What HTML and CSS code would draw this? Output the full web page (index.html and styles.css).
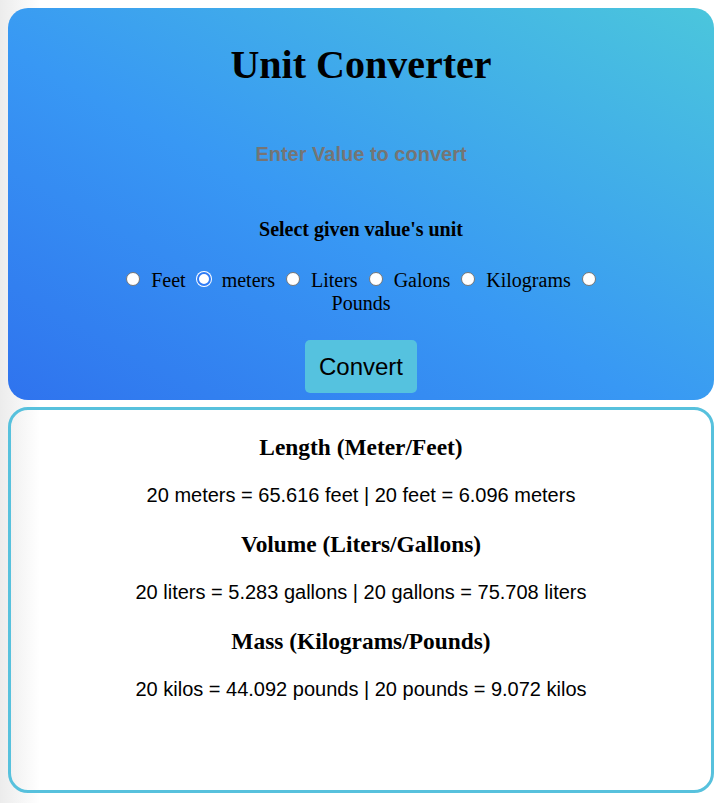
FILE: index.html
```html
<!DOCTYPE html>
<html lang="en">
<head>
<meta charset="utf-8">
<title>Unit Converter</title>
<link rel="stylesheet" href="styles.css">
</head>
<body>
  <div class="converter">
    <h1 class="title">Unit Converter</h1>
    <input class="value-input" type="text" placeholder="Enter Value to convert">
    <div class="unit-label">Select given value's unit</div>
    <div class="units">
      <input class="radio" type="radio" name="unit" id="feet"> <label for="feet">Feet</label>
      <input class="radio radio-active" type="radio" name="unit" id="meters"> <label for="meters">meters</label>
      <input class="radio" type="radio" name="unit" id="liters"> <label for="liters">Liters</label>
      <input class="radio" type="radio" name="unit" id="galons"> <label for="galons">Galons</label>
      <input class="radio" type="radio" name="unit" id="kilograms"> <label for="kilograms">Kilograms</label>
      <input class="radio" type="radio" name="unit" id="pounds"> <label for="pounds">Pounds</label>
    </div>
    <button class="convert-btn" type="button">Convert</button>
  </div>
  <div class="results">
    <h3 class="result-title">Length (Meter/Feet)</h3>
    <p class="result-text">20 meters = 65.616 feet | 20 feet = 6.096 meters</p>
    <h3 class="result-title">Volume (Liters/Gallons)</h3>
    <p class="result-text">20 liters = 5.283 gallons | 20 gallons = 75.708 liters</p>
    <h3 class="result-title">Mass (Kilograms/Pounds)</h3>
    <p class="result-text">20 kilos = 44.092 pounds | 20 pounds = 9.072 kilos</p>
  </div>
</body>
</html>
```

FILE: styles.css
```css
html, body {
  margin: 0;
  padding: 0;
}
body {
  margin: 8px;
  font-family: "Liberation Serif", "Times New Roman", serif;
  font-size: 20px;
  color: #000;
  background: linear-gradient(to right, #ececec 0px, #ffffff 40px) fixed;
  min-height: 787px;
}
.converter {
  width: 706px;
  height: 392px;
  box-sizing: border-box;
  border-radius: 20px;
  background: linear-gradient(to top right, #2f73ee 0%, #3898f4 45%, #4bc6dc 100%);
  display: flex;
  flex-direction: column;
  align-items: center;
}
.title {
  margin: 34px 0 0;
  font-size: 40px;
  font-weight: bold;
  line-height: 46px;
}
.value-input {
  margin-top: 51px;
  width: 400px;
  height: 30px;
  padding: 0;
  border: none;
  background: transparent;
  text-align: center;
  font-family: "Liberation Sans", Arial, sans-serif;
  font-size: 20px;
  font-weight: bold;
  outline: none;
}
.value-input::placeholder {
  color: #757575;
  opacity: 1;
}
.unit-label {
  margin-top: 49px;
  font-weight: bold;
  line-height: 23px;
}
.units {
  margin-top: 28px;
  width: 500px;
  text-align: center;
  line-height: 23px;
}
.radio {
  appearance: none;
  -webkit-appearance: none;
  width: 14px;
  height: 14px;
  margin: 3px 6px 0 6px;
  box-sizing: border-box;
  border: 1px solid #767676;
  border-radius: 50%;
  background: #fff;
  vertical-align: baseline;
  position: relative;
  top: -1px;
}
.radio-active {
  border: 2px solid #2f7cf6;
  box-shadow: 0 0 0 1px #ffffff;
}
.convert-btn {
  margin-top: 25px;
  padding: 12px 14px;
  border: none;
  border-radius: 5px;
  background: #55c2df;
  color: #000;
  font-family: "Liberation Sans", Arial, sans-serif;
  font-size: 24px;
  line-height: 29px;
}
.results {
  margin-top: 7px;
  width: 706px;
  height: 386px;
  box-sizing: border-box;
  border: 3px solid #57c1dd;
  border-radius: 20px;
  padding-top: 23.5px;
  display: flex;
  flex-direction: column;
  align-items: center;
  gap: 23.5px;
}
.result-title {
  margin: 0;
  font-size: 23.4px;
  font-weight: bold;
  line-height: 27px;
}
.result-text {
  margin: 0;
  font-family: "Liberation Sans", Arial, sans-serif;
  font-size: 20px;
  line-height: 23px;
}
```
